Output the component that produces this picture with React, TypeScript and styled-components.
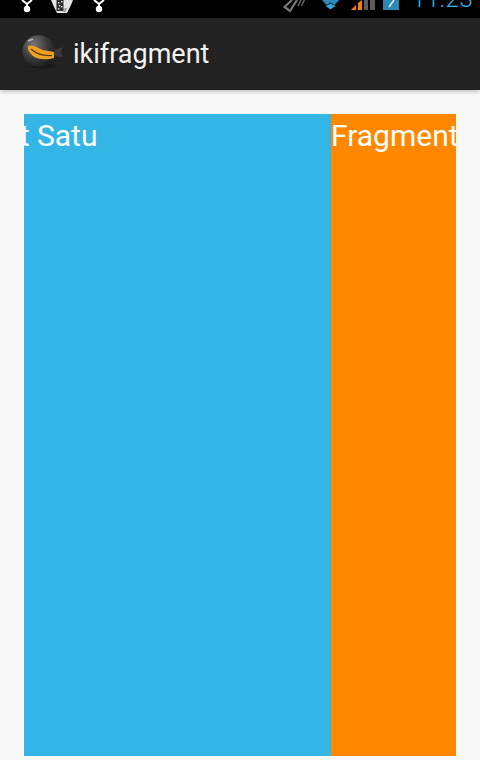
import React from 'react';
import styled, { createGlobalStyle } from 'styled-components';

const GlobalStyle = createGlobalStyle`
  html, body {
    margin: 0;
    padding: 0;
    background: #f8f8f8;
    font-family: Roboto, "Liberation Sans", sans-serif;
  }
`;

const Screen = styled.div`
  width: 480px;
  height: 760px;
  display: flex;
  flex-direction: column;
  overflow: hidden;
`;

const StatusBar = styled.div`
  height: 18px;
  flex: none;
  background: #000;
  display: flex;
  overflow: hidden;
`;

const StatusLeft = styled.div`
  display: flex;
  gap: 16px;
  padding-left: 20px;
`;

const StatusRight = styled.div`
  margin-left: auto;
  display: flex;
  padding-right: 10px;
`;

const IconSlot = styled.span<{ $gap: number }>`
  display: flex;
  margin-right: ${p => p.$gap}px;
`;

const Clock = styled.span`
  align-self: flex-end;
  width: 58px;
  font-size: 24px;
  line-height: 27px;
  height: 27px;
  margin-bottom: 5px;
  color: #33b5e5;
  font-weight: 300;
  letter-spacing: 0.6px;
  white-space: nowrap;
`;

const ActionBar = styled.header`
  height: 72px;
  flex: none;
  background: #222;
  display: flex;
  align-items: center;
  padding-left: 21px;
  gap: 8px;
  box-shadow: 0 1px 5px rgba(0, 0, 0, 0.3);
  position: relative;
`;

const Title = styled.h1`
  margin: 0;
  font-size: 27px;
  font-weight: 400;
  color: #f2f2f2;
`;

const Content = styled.main`
  flex: 1;
  display: flex;
  padding: 24px 24px 4px;
  background: #f8f8f8;
`;

const Pane = styled.section<{ $bg: string; $grow: number }>`
  flex: ${p => p.$grow};
  min-width: 0;
  background: ${p => p.$bg};
  overflow: hidden;
`;

const PaneLabel = styled.div<{ $shift: number }>`
  margin-left: ${p => p.$shift}px;
  font-size: 30px;
  line-height: 44px;
  color: #fff;
  white-space: nowrap;
`;

const Usb = () => (
  <svg width="14" height="18" viewBox="0 0 14 18">
    <path d="M2 0 L7 4 L12 0 M7 4 V8" stroke="#fff" strokeWidth="2" fill="none" />
    <circle cx="7" cy="9" r="3.2" fill="#fff" />
  </svg>
);

const Sd = () => (
  <svg width="26" height="18" viewBox="0 0 26 18">
    <path d="M1 0 H23 L21 5 L17 13 H7 L4 7 Z" fill="#e4e4e4" />
    <rect x="6.5" y="0" width="7" height="11" fill="#2e2e2e" />
    <path d="M8 2h1.4v1.4H8zM11 1h1.4v1.4H11zM9 5h1.4v1.4H9zM11 6h1.4v1.4H11zM8 8h1.4v1.4H8z" fill="#ddd" />
    <path d="M15 8 L17 8 L15.5 12 L13 12 Z" fill="#999" />
  </svg>
);

const Phone = () => (
  <svg width="22" height="18" viewBox="0 0 22 18">
    <path d="M9 0 L1.5 7 L7 11 L14 0" fill="none" stroke="#777" strokeWidth="2.2" />
    <path d="M15 6 L18 0 M18.5 6 L21.5 0" stroke="#666" strokeWidth="1.4" />
  </svg>
);

const Dropbox = () => (
  <svg width="17" height="18" viewBox="0 0 17 18">
    <path d="M0 0 H17 L12.5 5 L8.5 2.5 L4.5 5 Z" fill="#2a8cc0" />
    <path d="M3.5 6 L8.5 3.5 L13.5 6 L8.5 9.5 Z" fill="#33a5d8" />
  </svg>
);

const Signal = () => (
  <svg width="24" height="18" viewBox="0 0 24 18">
    <path d="M0 10 L5 5 V10 Z" fill="#ff7a0c" />
    <path d="M7 10 V3 L11 0 V10 Z" fill="#ff7a0c" />
    <rect x="13" y="0" width="4" height="10" fill="#5c5c5c" />
    <rect x="19" y="0" width="5" height="10" fill="#5c5c5c" />
  </svg>
);

const Battery = () => (
  <svg width="16" height="18" viewBox="0 0 16 18">
    <rect width="16" height="10" fill="#2c88b0" />
    <path d="M11 0 L6 7" stroke="#e8f4f8" strokeWidth="1.4" />
  </svg>
);

const NinjaLogo = () => (
  <svg width="44" height="40" viewBox="0 0 44 40">
    <defs>
      <radialGradient id="ball" cx="35%" cy="30%" r="75%">
        <stop offset="0%" stopColor="#777" />
        <stop offset="55%" stopColor="#3c3c3c" />
        <stop offset="100%" stopColor="#1c1c1c" />
      </radialGradient>
    </defs>
    <ellipse cx="22" cy="32" rx="13" ry="2.5" fill="#181818" />
    <path d="M33 16 L42 13 L40 18 L42 23 L33 22 Z" fill="#3a3a3a" />
    <circle cx="17.5" cy="17" r="16" fill="url(#ball)" />
    <path d="M7 12 C12 10 17 14 22 16 L33 18 L33 24 C26 26 17 26 12 22 C9 19 6 16 7 12 Z" fill="#f0a020" />
    <path d="M10 15 C15 20 22 22 31 21.5" stroke="#5a3a10" strokeWidth="1.2" fill="none" />
    <path d="M7 7 L12 5" stroke="#b8b8b8" strokeWidth="1.6" />
  </svg>
);

export default function App() {
  return (
    <Screen>
      <GlobalStyle />
      <StatusBar>
        <StatusLeft>
          <Usb />
          <Sd />
          <Usb />
        </StatusLeft>
        <StatusRight>
          <IconSlot $gap={17}><Phone /></IconSlot>
          <IconSlot $gap={12}><Dropbox /></IconSlot>
          <IconSlot $gap={8}><Signal /></IconSlot>
          <IconSlot $gap={13}><Battery /></IconSlot>
          <Clock>11:23</Clock>
        </StatusRight>
      </StatusBar>
      <ActionBar>
        <NinjaLogo />
        <Title>ikifragment</Title>
      </ActionBar>
      <Content>
        <Pane $bg="#33b5e5" $grow={307}>
          <PaneLabel $shift={-122}>Fragment Satu</PaneLabel>
        </Pane>
        <Pane $bg="#ff8800" $grow={125}>
          <PaneLabel $shift={0}>Fragment Dua</PaneLabel>
        </Pane>
      </Content>
    </Screen>
  );
}
